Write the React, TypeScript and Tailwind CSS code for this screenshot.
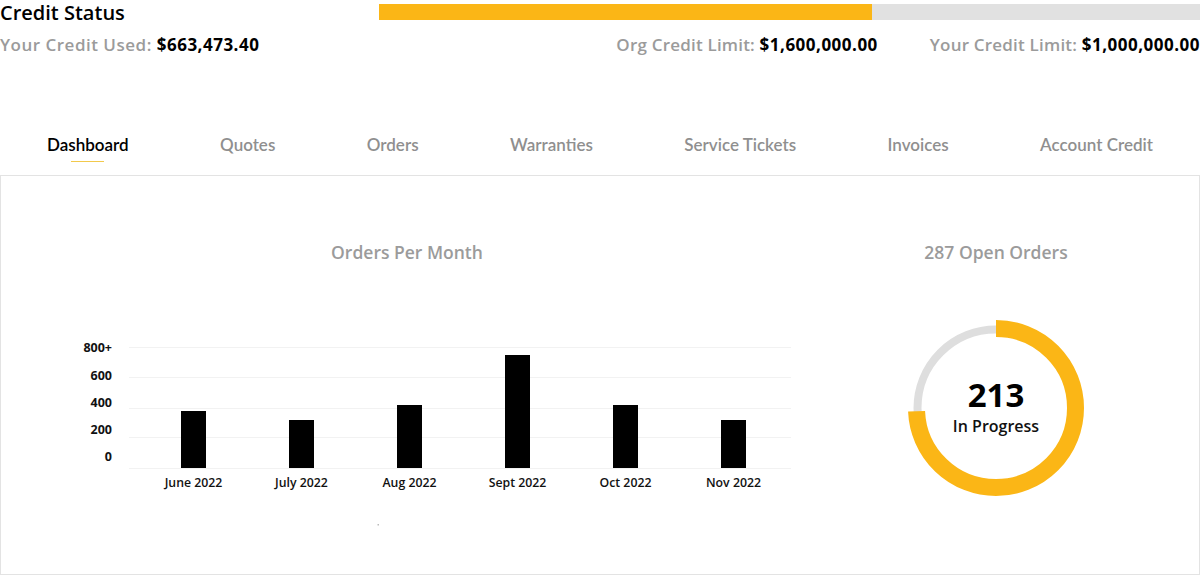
import React from 'react';

const tabs = ['Dashboard', 'Quotes', 'Orders', 'Warranties', 'Service Tickets', 'Invoices', 'Account Credit'];

const months = [
  { label: 'June 2022', top: 412 },
  { label: 'July 2022', top: 421 },
  { label: 'Aug 2022', top: 406 },
  { label: 'Sept 2022', top: 356 },
  { label: 'Oct 2022', top: 406 },
  { label: 'Nov 2022', top: 421 },
];

const ticks = [
  { label: '800+', y: 349 },
  { label: '600', y: 377 },
  { label: '400', y: 404 },
  { label: '200', y: 431 },
  { label: '0', y: 458 },
];

const gridLines = [348, 378, 409, 438, 469];

// svg origin sits at page y=330
const OY = 330;

function OrdersChart() {
  return (
    <svg width="812" height="200" viewBox="0 0 812 200" className="block">
      {gridLines.map((y) => (
        <line key={y} x1="128" x2="790" y1={y - OY + 0.5} y2={y - OY + 0.5} stroke="#f2f2f2" strokeWidth="1" />
      ))}
      {ticks.map((t) => (
        <text
          key={t.label}
          x="111"
          y={t.y - OY + 4}
          textAnchor="end"
          fontSize="12.5"
          fontWeight="700"
          fill="#111"
          fontFamily="'Open Sans', sans-serif"
        >
          {t.label}
        </text>
      ))}
      {months.map((m, i) => {
        const cx = 192.5 + i * 108;
        return (
          <g key={m.label}>
            <rect x={cx - 12.5} y={m.top - OY} width="25" height={469 - m.top} fill="#000" />
            <text
              x={cx}
              y={484 - OY + 4}
              textAnchor="middle"
              fontSize="12.3"
              fontWeight="600"
              fill="#111"
              fontFamily="'Open Sans', sans-serif"
            >
              {m.label}
            </text>
          </g>
        );
      })}
      <rect x="376.5" y={525 - OY} width="1.5" height="1.5" fill="#bbb" />
    </svg>
  );
}

function Donut() {
  const r = 79.5;
  const c = 2 * Math.PI * r;
  const pct = 213 / 287;
  return (
    <div className="relative w-[180px] h-[180px]">
      <svg width="180" height="180" viewBox="0 0 180 180" className="block">
        <circle cx="90" cy="90" r="78.5" fill="none" stroke="#dedede" strokeWidth="8" />
        <circle
          cx="90"
          cy="90"
          r={r}
          fill="none"
          stroke="#fbb616"
          strokeWidth="17"
          strokeDasharray={`${c * pct} ${c}`}
          transform="rotate(-90 90 90)"
        />
      </svg>
      <div className="absolute inset-0 flex flex-col items-center justify-center pb-[4px]">
        <div className="text-[33px] leading-[33px] font-bold text-black">213</div>
        <div className="mt-[6px] text-[16px] leading-[18px] font-semibold text-[#111]">In Progress</div>
      </div>
    </div>
  );
}

export default function App() {
  return (
    <div className="w-[1200px] h-[575px] bg-white overflow-hidden font-['Open_Sans',sans-serif]">
      <div className="flex items-start">
        <h1 className="w-[379px] mt-[1px] text-[20px] leading-[24px] font-semibold text-black">Credit Status</h1>
        <div className="flex-1 h-4 mt-[4px] bg-[#e1e1e1]">
          <div className="w-[493px] h-full bg-[#fbb616]" />
        </div>
      </div>
      <div className="flex justify-between mt-[8px] text-[17px] leading-[24px] font-semibold tracking-[0.5px]">
        <div>
          <span className="text-[#9b9b9b]">Your Credit Used: </span>
          <span className="text-black font-bold">$663,473.40</span>
        </div>
        <div className="flex gap-[52px]">
          <div>
            <span className="text-[#9b9b9b] tracking-[0.2px]">Org Credit Limit: </span>
            <span className="text-black font-bold">$1,600,000.00</span>
          </div>
          <div>
            <span className="text-[#9b9b9b] tracking-[0.2px]">Your Credit Limit: </span>
            <span className="text-black font-bold">$1,000,000.00</span>
          </div>
        </div>
      </div>
      <nav className="flex justify-between px-[47px] mt-[78px] font-['Lato',sans-serif] text-[17px] leading-[20px] font-semibold">
        {tabs.map((t, i) => (
          <div key={t} className="flex flex-col items-center">
            <span className={i === 0 ? 'text-black' : 'text-[#8f8f8f]'}>{t}</span>
            <span className={i === 0 ? 'mt-[6px] w-[33px] h-px bg-[#f2c94c]' : 'mt-[6px] h-px'} />
          </div>
        ))}
      </nav>
      <div className="mt-[13px] h-[400px] border border-[#e3e3e3] flex">
        <div className="w-[812px] pt-[66px] flex flex-col items-center">
          <h2 className="text-[17.5px] leading-[20px] font-semibold text-[#9b9b9b]">Orders Per Month</h2>
          <div className="mt-[67px] self-stretch">
            <OrdersChart />
          </div>
        </div>
        <div className="flex-1 pr-[20px] pt-[66px] flex flex-col items-center">
          <h2 className="text-[17.5px] leading-[20px] font-semibold text-[#9b9b9b]">287 Open Orders</h2>
          <div className="mt-[56px]">
            <Donut />
          </div>
        </div>
      </div>
    </div>
  );
}
